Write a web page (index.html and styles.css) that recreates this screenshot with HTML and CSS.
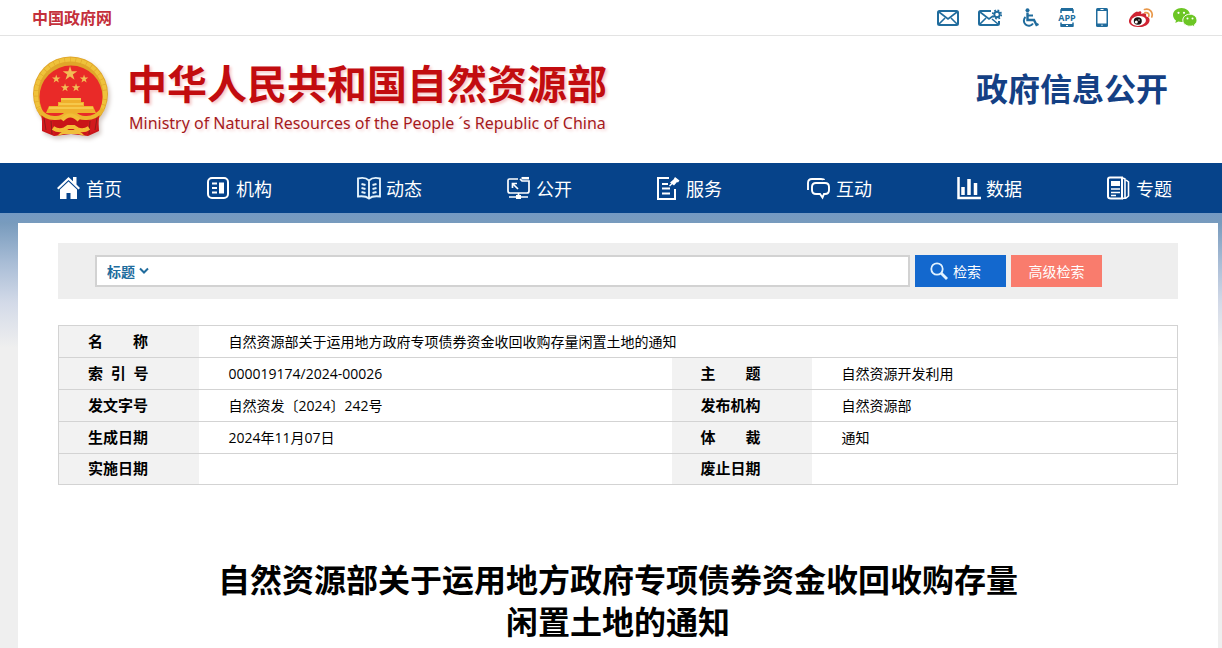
FILE: index.html
```html
<!DOCTYPE html>
<html lang="zh-CN">
<head>
<meta charset="utf-8">
<title>自然资源部 - 政府信息公开</title>
<link rel="stylesheet" href="styles.css">
</head>
<body>
<div class="topbar">
  <a class="gov-link" href="#">中国政府网</a>
  <div class="tools">
    <a href="#" aria-label="邮箱"><svg width="22" height="18" viewBox="0 0 22 18" fill="none" stroke="#206c9d" stroke-width="2"><rect x="1" y="2" width="20" height="14" rx="1.500"/><path d="M2 3l9 7 9-7M2 15l6-6M20 15l-6-6" stroke-width="1.600"/></svg></a>
    <a href="#" aria-label="邮件设置"><svg width="24" height="18" viewBox="0 0 24 18" fill="none" stroke="#206c9d" stroke-width="2"><path d="M13 2H2.500Q1 2 1 3.500v11Q1 16 2.500 16h17q1.500 0 1.500-1.500V12"/><path d="M2 3l9 7 4-3M2 15l6-6M20 15l-6-5" stroke-width="1.600"/><circle cx="19" cy="5.500" r="2.700" stroke-width="1.900"/><circle cx="19" cy="5.500" r="4.200" stroke-dasharray="1.700 1.600" stroke-width="1.800"/></svg></a>
    <a href="#" aria-label="无障碍"><svg width="18" height="20" viewBox="0 0 18 20" fill="none" stroke="#206c9d" stroke-width="2"><circle cx="6.500" cy="2.200" r="2" fill="#206c9d" stroke="none"/><path d="M6.500 4.500V12H13l2.500 5 2-1" stroke-width="2.400"/><path d="M7 7.500h5"/><path d="M4.500 9A5 5 0 1 0 12 15.500" stroke-width="2"/></svg></a>
    <a href="#" aria-label="APP"><svg width="18" height="20" viewBox="0 0 18 20" fill="none" stroke="#206c9d"><path d="M3 5V2h12v3M3 14.500V18h12v-3.500" stroke-width="1.500"/><path d="M3 1.500h12M3 17.500h12" stroke-width="3"/><path d="M8 17.500h2" stroke="#fff"/><text class="app-text" x="9" y="13" text-anchor="middle">APP</text></svg></a>
    <a href="#" aria-label="手机版"><svg width="14" height="20" viewBox="0 0 14 20"><rect x="1" y="0" width="12" height="19" rx="1.500" fill="#206c9d"/><path d="M2.500 3h9v12.500h-9z" fill="#fff"/><path d="M5.500 1.500h3M6.300 17.200h1.400" stroke="#fff"/></svg></a>
    <a href="#" aria-label="微博"><svg width="26" height="20" viewBox="0 0 26 20"><path d="M10 4C13 2 14 4 13 6c4-1.500 6-.5 5 2.300 2.500.7 4 2 3.500 4.700C20.800 17 15.500 19.500 10 19 4 18.800.5 16 1 12.500 1.500 9 6 4 9 3.500z" fill="#cf2433"/><ellipse cx="10.500" cy="13" rx="7.500" ry="4.900" transform="rotate(-8 10 13)" fill="#fff"/><ellipse cx="9.800" cy="13" rx="4" ry="3.700" fill="#171313"/><circle cx="8.300" cy="14" r="1.500" fill="#fff"/><circle cx="11" cy="12" r=".7" fill="#fff"/><path d="M16.500 1.500c5-1.500 9 2.500 7.300 7.500M17 4.700c3-.7 4.500 1.300 3.700 3.700" fill="none" stroke="#e8984a" stroke-width="1.700" stroke-linecap="round"/></svg></a>
    <a href="#" aria-label="微信"><svg width="24" height="20" viewBox="0 0 24 20"><path d="M8.500 0C3.800 0 0 3 0 7c0 2.200 1.200 4.200 3 5.500L2.300 15l3-1.500c1 .3 2.200.5 3.500.5C13.500 14 17 11 17 7s-4-7-8.500-7z" fill="#6cc624"/><path d="M17 6.200c-4 0-7.200 2.600-7.200 6s3.200 6 7.200 6c.9 0 1.800-.1 2.600-.4L22 19l-.6-2.200c1.600-1.100 2.600-2.700 2.600-4.600 0-3.400-3.200-6-7-6z" fill="#6cc624" stroke="#fff"/><g fill="#fff"><circle cx="5.500" cy="4.800" r="1.100"/><circle cx="11" cy="4.800" r="1.100"/><circle cx="14.500" cy="10.500" r="1"/><circle cx="19.500" cy="10.500" r="1"/></g></svg></a>
  </div>
</div>

<header class="header">
  <svg class="emblem" width="78" height="84" viewBox="0 0 78 84" aria-hidden="true">
    <circle cx="38.500" cy="38" r="37.500" fill="#e0a62a"/>
    <circle cx="38.500" cy="38" r="34.500" fill="none" stroke="#efc23b" stroke-width="4" stroke-dasharray="5 .6"/>
    <circle cx="39" cy="41" r="31.500" fill="#e92a28"/>
    <path d="M10 57c6 4 10 5 13 5 5 0 8-3 11-5 3-2 6-2 9 0 3 2 6 5 11 5 4 0 8-2 12-5l1 18-11 5-17-2-17 2-12-5z" fill="#c91418"/>
    <path d="M9 56l11 7 3 16-12-5z" fill="#d2191d"/>
    <path d="M68 56l-11 7-3 16 11-5z" fill="#d2191d"/>
    <path d="M12 62l2 12M65 62l-2 12M19 65l1 13M58 65l-1 13" stroke="#8e1c19"/>
    <path d="M6 53q8 10 18 9 6 0 10-4h9q4 4 10 4 10 1 18-9" fill="none" stroke="#ecb52e" stroke-width="4"/>
    <path d="M30 64q8-9 17 0M21 72q6 4 12 1l3-2h6l3 2q6 3 12-1" fill="none" stroke="#f3bd36" stroke-width="4"/>
    <path d="M25 80q4-4 8-6h12q4 2 8 6l-7-2H32z" fill="#f0bd3a"/>
    <path d="M14 57l3-7h9v-4h3v-4h20v4h3v4h9l3 7z" fill="#efb02c"/>
    <path d="M29 43h20M27 48h24M17 52h44" stroke="#f9cf56" stroke-width="1.500"/>
    <g fill="#f2bd55">
      <path id="star" d="M38 10l1.700 5.200h5.600l-4.500 3.300 1.700 5.300-4.500-3.300-4.500 3.300 1.700-5.300-4.500-3.300h5.600z"/>
      <use href="#star" transform="translate(2.200 12.800) scale(.58)"/>
      <use href="#star" transform="translate(30 12.800) scale(.58)"/>
      <use href="#star" transform="translate(11 21.500) scale(.58)"/>
      <use href="#star" transform="translate(22 21.500) scale(.58)"/>
    </g>
  </svg>
  <div class="brand">
    <div class="brand-cn">中华人民共和国自然资源部</div>
    <div class="brand-en">Ministry of Natural Resources of the People ´s Republic of China</div>
  </div>
  <div class="section-name">政府信息公开</div>
</header>

<nav class="nav">
  <a href="#"><svg width="24" height="24" viewBox="0 0 24 24" fill="#fff"><path d="M11.500 1L0 12l1.500 1.500 10-9.500 10 9.500L23 12l-3.500-3.400V1H16v4.200z"/><path d="M11.500 5.500L3 13.500V23h6.500v-6h4v6H20v-9.500z"/></svg>首页</a>
  <a href="#"><svg width="24" height="24" viewBox="0 0 24 24" fill="none" stroke="#fff" stroke-width="2"><rect x="1" y="2" width="20" height="20" rx="4"/><path d="M5 7.500h5M5 12h5M5 16.500h5"/><path d="M12 6.500h5v11h-5z" fill="#fff" stroke="none"/></svg>机构</a>
  <a href="#"><svg width="24" height="24" viewBox="0 0 24 24" fill="none" stroke="#e3f2fb" stroke-width="1.900"><path d="M12 4.500C9 1.500 5 1.500 1 2.500v18c4-.5 8-.5 11 2 3-2.500 7-2.500 11-2v-18c-4-1-8-1-11 2zM12 4.500v18"/><path d="M4.500 8l4 1M4.500 12l4 1M4.500 16l4 1M19.500 8l-4 1M19.500 12l-4 1M19.500 16l-4 1"/></svg>动态</a>
  <a href="#"><svg width="24" height="24" viewBox="0 0 24 24" fill="none" stroke="#fff" stroke-width="1.700"><path d="M11 3H2.500Q1 3 1 4.500V15q0 2 2 2h17q2 0 2-2V5h-7l-2-2"/><path d="M14.500 2.200H22" stroke-width="2.500"/><path d="M5.500 12V7.500H10M6 8l5 5"/><path d="M11.500 17v4M2 21h19"/><path d="M9 19h5v4H9z" fill="#fff" stroke="none"/></svg>公开</a>
  <a href="#"><svg width="24" height="24" viewBox="0 0 24 24" fill="none" stroke="#fff" stroke-width="2"><path d="M12 2H1v21h17V13"/><path d="M5 8h6M5 12.500h8M5 17.500h8"/><path d="M18 1l4.500 3.500-1.500 2-1-.5-3 3.500-4-3 3.500-3z" fill="#fff" stroke="none"/><path d="M12.500 10l3-3" stroke-width="1.500"/></svg>服务</a>
  <a href="#"><svg width="24" height="24" viewBox="0 0 24 24" fill="none" stroke="#fff" stroke-width="1.900"><path d="M1 14V7q0-4 4-4h9q3 0 3 1"/><path d="M9 7h9q4 0 4 4v3q0 4-4 4h-1l-1.500 3.500L13 18H9q-4 0-4-4v-3q0-4 4-4z"/></svg>互动</a>
  <a href="#"><svg width="24" height="24" viewBox="0 0 24 24" fill="none" stroke="#fff" stroke-width="2.500"><path d="M1.500 1v21H24"/><path d="M6 11v8M12 3v16M18.500 7v12" stroke-width="3.500"/></svg>数据</a>
  <a href="#"><svg width="24" height="24" viewBox="0 0 24 24" fill="none" stroke="#fff"><path d="M3 1.500h12v21H4q-3 0-3-2v-17q0-2 2-2z" stroke-width="2"/><path d="M4 5h9v5H4z" fill="#fff" stroke="none"/><path d="M4 13h9M4 16.500h9M4 19.500h5" stroke-width="1.700"/><path d="M16 2l2 1v19l-3 .5M19 4l2.500 2v14l-3 2.500" stroke-width="1.600"/></svg>专题</a>
</nav>

<main class="panel">
  <form class="search">
    <div class="search-box">
      <select class="field" aria-label="检索字段"><option>标题</option></select>
      <svg class="chevron" width="10" height="8" viewBox="0 0 10 8" fill="none" stroke="#206c9d" stroke-width="2"><path d="M1 1.500l4 4 4-4"/></svg>
      <input class="query" type="text" aria-label="检索内容">
    </div>
    <button class="btn btn-search" type="button"><svg width="18" height="18" viewBox="0 0 18 18" fill="none" stroke="#e1f2ff"><circle cx="7" cy="7" r="5.700" stroke-width="1.800"/><path d="M11 11l6 6" stroke-width="2.800"/></svg>检索</button>
    <button class="btn btn-advanced" type="button">高级检索</button>
  </form>

  <table class="meta">
    <colgroup><col class="col-label"><col class="col-wide"><col class="col-label"><col></colgroup>
    <tr><th scope="row">名&emsp;&emsp;称</th><td colspan="3">自然资源部关于运用地方政府专项债券资金收回收购存量闲置土地的通知</td></tr>
    <tr><th scope="row">索&nbsp;&nbsp;引&nbsp;&nbsp;号</th><td>000019174/2024-00026</td><th scope="row">主&emsp;&emsp;题</th><td>自然资源开发利用</td></tr>
    <tr><th scope="row">发文字号</th><td>自然资发〔2024〕242号</td><th scope="row">发布机构</th><td>自然资源部</td></tr>
    <tr><th scope="row">生成日期</th><td>2024年11月07日</td><th scope="row">体&emsp;&emsp;裁</th><td>通知</td></tr>
    <tr><th scope="row">实施日期</th><td></td><th scope="row">废止日期</th><td></td></tr>
  </table>

  <h1 class="title">自然资源部关于运用地方政府专项债券资金收回收购存量<br>闲置土地的通知</h1>
</main>
</body>
</html>
```
FILE: styles.css
```css
* { box-sizing: border-box; }

body {
  margin: 0;
  min-height: 100vh;
  display: flex;
  flex-direction: column;
  overflow-x: hidden;
  background: #efefef;
  color: #000;
  font-family: "Open Sans", "Noto Sans CJK SC", sans-serif;
  font-size: 14px;
}

a { color: inherit; text-decoration: none; }
svg { display: block; flex: none; }

.topbar {
  display: flex;
  align-items: center;
  justify-content: space-between;
  height: 36px;
  padding: 0 25px 2px 32px;
  background: #fff;
  border-bottom: 1px solid #e3e3e3;
}
.gov-link { color: #c4303b; font-size: 16px; font-weight: 700; }
.tools { display: flex; align-items: center; gap: 19px; padding-top: 2px; }
.app-text { font: bold 9px "Open Sans", sans-serif; fill: #206c9d; stroke: none; }

.header {
  display: flex;
  align-items: flex-start;
  height: 127px;
  padding: 20px 54px 0 32px;
  background: #fff;
}
.emblem { filter: drop-shadow(2px 3px 2px #d3c9c5); }
.brand { margin-left: 17px; white-space: nowrap; }
.brand-cn {
  color: #c20c0f;
  font-size: 40px;
  font-weight: 700;
  line-height: 56px;
  text-shadow: 2px 2px 3px #f6caca;
}
.brand-en {
  padding-left: 2px;
  color: #a5191c;
  font-family: "Noto Sans", sans-serif;
  font-size: 16px;
  line-height: 22px;
  text-shadow: 2px 2px 3px #f6d6d6;
}
.section-name {
  margin-left: auto;
  color: #144084;
  font-size: 32px;
  font-weight: 700;
  line-height: 66px;
  white-space: nowrap;
}

.nav {
  display: grid;
  grid-template-columns: repeat(8, 1fr);
  height: 50px;
  padding: 0 4px 0 18px;
  background: #06438a;
  color: #fff;
  font-size: 18px;
}
.nav a {
  display: flex;
  align-items: center;
  gap: 5px;
  padding-left: 39px;
  white-space: nowrap;
}

.panel {
  flex: 1;
  padding: 20px 40px 0;
  border-style: solid;
  border-width: 10px 4px 0 18px;
  border-image: linear-gradient(#7499c3, #789bbd 10px, #a9bdd6 50px, #d3dae8 90px, #efefef 135px) 10 4 0 18;
  background: #fff;
}

.search {
  display: flex;
  align-items: center;
  gap: 5px;
  height: 56px;
  padding: 0 76px 0 37px;
  background: #eee;
}
.search-box {
  flex: 1;
  display: flex;
  align-items: center;
  height: 32px;
  padding-left: 10px;
  border: 2px solid #d2d2d2;
  background: #fff;
}
.field {
  appearance: none;
  width: 44px;
  margin-right: -12px;
  padding: 0;
  border: 0;
  background: none;
  color: #206c9d;
  font: bold 14px "Noto Sans CJK SC", sans-serif;
}
.chevron { pointer-events: none; }
.query {
  flex: 1;
  min-width: 0;
  height: 100%;
  padding: 0 8px;
  border: 0;
  outline: 0;
  background: none;
  font: inherit;
}
.btn {
  display: flex;
  align-items: center;
  width: 91px;
  height: 32px;
  padding: 0;
  border: 0;
  color: #fff;
  font: 14px "Noto Sans CJK SC", sans-serif;
  white-space: nowrap;
}
.btn-search { gap: 5px; padding-left: 15px; background: #1368ce; }
.btn-advanced { justify-content: center; background: #f97c6d; }

.meta {
  width: 100%;
  margin-top: 26px;
  table-layout: fixed;
  border-collapse: collapse;
  border: 1px solid #d3d3d3;
}
.col-label { width: 140px; }
.col-wide { width: 473px; }
.meta tr { border-bottom: 1px solid #d3d3d3; }
.meta th, .meta td {
  height: 32px;
  padding: 0 0 0 30px;
  text-align: left;
  line-height: 24px;
  white-space: nowrap;
}
.meta th {
  padding: 0 0 2px 29px;
  background: #f2f2f2;
  font-size: 15px;
  font-weight: 700;
}
.meta tr:last-child th { height: 31px; }
.meta tr:last-child td { height: 31px; }

.title {
  margin: 74px 0 0;
  font-size: 32px;
  font-weight: 700;
  line-height: 42px;
  text-align: center;
}
```
